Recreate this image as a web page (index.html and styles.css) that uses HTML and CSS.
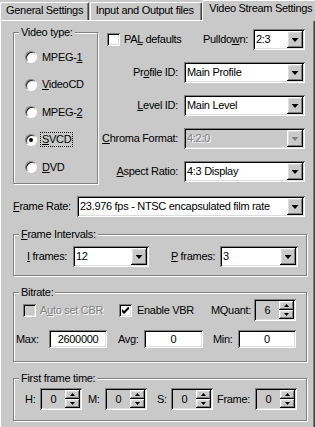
FILE: index.html
```html
<!DOCTYPE html>
<html lang="en">
<head>
    <meta charset="UTF-8">
    <meta name="viewport" content="width=device-width, initial-scale=1.0">
    <title>Video Stream Settings</title>
    <link rel="stylesheet" href="styles.css">
</head>
<body>
    <!-- Pestañas -->
    <div class="tabs">
        <div class="tab tab-general">General Settings</div>
        <div class="tab tab-io">Input and Output files</div>
        <div class="tab tab-active">Video Stream Settings</div>
    </div>

    <div class="panel">
        <div class="top">
            <!-- Tipo de video -->
            <fieldset class="group group-type">
                <legend>Video type:</legend>
                <div class="radio-list">
                    <div class="radio-row"><span class="radio"></span><span>MPEG-<u>1</u></span></div>
                    <div class="radio-row"><span class="radio"></span><span><u>V</u>ideoCD</span></div>
                    <div class="radio-row"><span class="radio"></span><span>MPEG-<u>2</u></span></div>
                    <div class="radio-row"><span class="radio on"></span><span class="focus"><u>S</u>VCD</span></div>
                    <div class="radio-row"><span class="radio"></span><span><u>D</u>VD</span></div>
                </div>
            </fieldset>

            <div class="params">
                <div class="row row-first">
                    <span class="check"></span>
                    <span class="check-label">PA<u>L</u> defaults</span>
                    <span class="lbl lbl-pull">Pulldo<u>w</u>n:</span>
                    <div class="combo combo-pull">
                        <span class="combo-text">2:3</span>
                        <span class="combo-btn"><i class="arrow"></i></span>
                    </div>
                </div>
                <div class="row">
                    <span class="lbl">Pr<u>o</u>file ID:</span>
                    <div class="combo combo-wide">
                        <span class="combo-text">Main Profile</span>
                        <span class="combo-btn"><i class="arrow"></i></span>
                    </div>
                </div>
                <div class="row">
                    <span class="lbl"><u>L</u>evel ID:</span>
                    <div class="combo combo-wide">
                        <span class="combo-text">Main Level</span>
                        <span class="combo-btn"><i class="arrow"></i></span>
                    </div>
                </div>
                <div class="row">
                    <span class="lbl"><u>C</u>hroma Format:</span>
                    <div class="combo combo-wide disabled">
                        <span class="combo-text">4:2:0</span>
                        <span class="combo-btn"><i class="arrow"></i></span>
                    </div>
                </div>
                <div class="row">
                    <span class="lbl"><u>A</u>spect Ratio:</span>
                    <div class="combo combo-wide">
                        <span class="combo-text">4:3 Display</span>
                        <span class="combo-btn"><i class="arrow"></i></span>
                    </div>
                </div>
            </div>
        </div>

        <!-- Frame rate -->
        <div class="rate-row">
            <span class="rate-lbl"><u>F</u>rame Rate:</span>
            <div class="combo combo-rate">
                <span class="combo-text">23.976 fps - NTSC encapsulated film rate</span>
                <span class="combo-btn"><i class="arrow"></i></span>
            </div>
        </div>

        <!-- Intervalos -->
        <fieldset class="group group-wide group-intervals">
            <legend><u>F</u>rame Intervals:</legend>
            <div class="int-row">
                <span class="int-lbl int-i"><u>I</u> frames:</span>
                <div class="combo combo-i">
                    <span class="combo-text">12</span>
                    <span class="combo-btn"><i class="arrow"></i></span>
                </div>
                <span class="int-lbl int-p"><u>P</u> frames:</span>
                <div class="combo combo-p">
                    <span class="combo-text">3</span>
                    <span class="combo-btn"><i class="arrow"></i></span>
                </div>
            </div>
        </fieldset>

        <!-- Bitrate -->
        <fieldset class="group group-wide group-bitrate">
            <legend>Bitrate:</legend>
            <div class="bit-row1">
                <div class="opt opt-auto">
                    <span class="check off"></span>
                    <span class="txt-off">A<u>u</u>to set CBR</span>
                </div>
                <div class="opt opt-vbr">
                    <span class="check">
                        <svg width="7" height="7" viewBox="0 0 7 7"><polygon points="0,2 2,4 6,0 7,0 7,2 2,7 0,5" fill="#000"/></svg>
                    </span>
                    <span>Enable VBR</span>
                </div>
                <span class="mq-lbl">MQuant:</span>
                <div class="spin spin-mq">
                    <span class="spin-val">6</span>
                    <span class="spin-btns"><span class="spin-btn"><i class="sarrow up"></i></span><span class="spin-btn"><i class="sarrow"></i></span></span>
                </div>
            </div>
            <div class="bit-row2">
                <span class="b-lbl b-max">Max:</span>
                <span class="edit e-max">2600000</span>
                <span class="b-lbl b-avg">Avg:</span>
                <span class="edit e-avg">0</span>
                <span class="b-lbl b-min">Min:</span>
                <span class="edit e-min">0</span>
            </div>
        </fieldset>

        <!-- Tiempo del primer frame -->
        <fieldset class="group group-wide group-time">
            <legend>First frame time:</legend>
            <div class="time-row">
                <span class="t-lbl t-h">H:</span>
                <div class="spin">
                    <span class="spin-val">0</span>
                    <span class="spin-btns"><span class="spin-btn"><i class="sarrow up"></i></span><span class="spin-btn"><i class="sarrow"></i></span></span>
                </div>
                <span class="t-lbl t-m">M:</span>
                <div class="spin">
                    <span class="spin-val">0</span>
                    <span class="spin-btns"><span class="spin-btn"><i class="sarrow up"></i></span><span class="spin-btn"><i class="sarrow"></i></span></span>
                </div>
                <span class="t-lbl t-s">S:</span>
                <div class="spin">
                    <span class="spin-val">0</span>
                    <span class="spin-btns"><span class="spin-btn"><i class="sarrow up"></i></span><span class="spin-btn"><i class="sarrow"></i></span></span>
                </div>
                <span class="t-lbl t-f">Frame:</span>
                <div class="spin">
                    <span class="spin-val">0</span>
                    <span class="spin-btns"><span class="spin-btn"><i class="sarrow up"></i></span><span class="spin-btn"><i class="sarrow"></i></span></span>
                </div>
            </div>
        </fieldset>
    </div>
</body>
</html>
```

FILE: styles.css
```css
body {
    margin: 0;
    width: 315px;
    height: 427px;
    overflow: hidden;
    background: #c9c9c9;
    font-family: "Liberation Sans", Arial, sans-serif;
    font-size: 11px;
    line-height: 13px;
    letter-spacing: -0.3px;
    color: #000;
    white-space: nowrap;
}

/* Pestañas */
.tabs {
    display: flex;
    align-items: flex-end;
    height: 20px;
}

.tab {
    box-sizing: border-box;
    height: 18px;
    padding-top: 1px;
    border-top: 1px solid #fff;
    border-left: 1px solid #fff;
    border-right: 1px solid #404040;
    border-radius: 2px 2px 0 0;
    box-shadow: inset -1px 0 #808080;
    overflow: hidden;
}

.tab-general { width: 89px; padding-left: 5px; }
.tab-io { width: 113px; margin-left: 1px; padding-left: 5px; }

.tab-active {
    position: relative; /* encima del borde del panel */
    width: 113px;
    height: 21px;
    margin-bottom: -1px;
    padding-left: 6px;
    background: #c9c9c9;
    border-right: none;
    box-shadow: none;
}

/* Panel */
.panel {
    box-sizing: border-box;
    height: 407px;
    border-top: 1px solid #fff;
    border-left: 1px solid #fff;
    border-right: 1px solid #404040;
    box-shadow: inset -1px 0 #808080;
}

/* Marcos agrupadores */
.group {
    box-sizing: border-box;
    margin: 0;
    padding: 0;
    min-width: 0;
    border: 1px solid #808080;
    box-shadow: inset 1px 1px #fff, 1px 1px #fff;
}

.group legend {
    margin-left: 5px;
    padding: 0 2px;
    background: #c9c9c9;
    line-height: 13px;
}

.top {
    display: flex;
    align-items: flex-start;
    padding-left: 12px;
}

.group-type {
    width: 85px;
    margin-top: 5px;
}

.radio-list {
    display: flex;
    flex-direction: column;
    gap: 13.5px;
    padding: 11px 0 9px 11px;
}

.radio-row {
    display: flex;
    align-items: center;
    gap: 5px;
    height: 14px;
}

.radio {
    position: relative;
    flex: none;
    box-sizing: border-box;
    width: 12px;
    height: 12px;
    border-radius: 50%;
    background: #fff;
    border: 1px solid;
    border-color: #808080 #fff #fff #808080;
    box-shadow: inset 1px 1px #202020;
}

.radio.on::after {
    content: "";
    position: absolute;
    left: 3px;
    top: 3px;
    width: 4px;
    height: 4px;
    border-radius: 50%;
    background: #000;
}

.focus {
    margin-left: -1px;
    padding: 0 1px;
    outline: 1px dotted #000;
}

/* Columna derecha */
.params {
    display: flex;
    flex-direction: column;
    gap: 12px;
    width: 198px;
    margin-left: 9px;
    padding-top: 8px;
}

.row {
    display: flex;
    align-items: center;
    justify-content: flex-end;
    gap: 6px;
    height: 21px;
}

.row-first { justify-content: flex-start; gap: 0; }
.check-label { margin-left: 4px; }
.lbl-pull { margin-left: auto; margin-right: 5px; }

/* Campos hundidos */
.combo, .spin, .edit, .check {
    box-shadow: inset 1px 1px #808080, inset -1px -1px #fff, inset 2px 2px #000, inset -2px -2px #dcdcdc;
}

.combo {
    display: flex;
    align-items: center;
    flex: none;
    box-sizing: border-box;
    height: 21px;
    padding: 2px;
    background: #fff;
}

.combo-text {
    flex: 1;
    padding-left: 1px;
    overflow: hidden;
}

.combo-btn, .spin-btn {
    display: flex;
    align-items: center;
    justify-content: center;
    box-sizing: border-box;
    background: #c9c9c9;
    box-shadow: inset -1px -1px #000, inset 1px 1px #fff, inset -2px -2px #808080, inset 2px 2px #dcdcdc;
}

.combo-btn { width: 16px; height: 17px; }

.arrow {
    display: block;
    width: 7px;
    height: 4px;
    margin-top: 1px;
    background: #000;
    clip-path: polygon(0 0, 100% 0, 50% 100%);
}

.combo.disabled { background: #c9c9c9; }
.combo.disabled .combo-text, .txt-off {
    color: #808080;
    text-shadow: 1px 1px #fff;
}
.combo.disabled .arrow { background: #808080; }

.combo-pull { width: 52px; }
.combo-wide { width: 121px; }

.check {
    display: flex;
    align-items: center;
    justify-content: center;
    flex: none;
    box-sizing: border-box;
    width: 13px;
    height: 13px;
    background: #fff;
}
.check.off { background: #c9c9c9; }

/* Frame rate */
.rate-row {
    display: flex;
    align-items: center;
    margin-top: 12px;
    padding-left: 12px;
}
.rate-lbl { width: 64px; }
.combo-rate { width: 228px; }

.group-wide {
    width: 294px;
    margin: 10px 0 0 12px;
}

/* Intervalos */
.group-intervals { margin-top: 11px; }

.int-row {
    display: flex;
    align-items: center;
    padding: 5px 0 8px 13px;
}
.int-i { width: 46px; }
.int-p { width: 49px; margin-left: 22px; }
.combo-i { width: 76px; }
.combo-p { width: 78px; }

/* Bitrate */
.bit-row1 {
    display: flex;
    align-items: center;
    height: 22px;
    padding-left: 9px;
}

.opt {
    display: flex;
    align-items: center;
    gap: 4px;
}
.opt-auto { width: 96px; }
.opt-vbr { width: 92px; gap: 5px; }
.mq-lbl { width: 43px; }
.spin-mq { width: 43px; }

.bit-row2 {
    display: flex;
    align-items: center;
    height: 20px;
    margin-top: 8px;
    padding: 0 0 12px 2px;
}

.b-max { width: 33px; }
.b-avg { width: 26px; margin-left: 11px; }
.b-min { width: 25px; margin-left: 10px; }

.edit {
    box-sizing: border-box;
    height: 18px;
    padding-top: 3px;
    background: #fff;
    text-align: center;
}
.e-max { width: 58px; }
.e-avg { width: 59px; }
.e-min { width: 58px; }

/* Spinners */
.spin {
    display: flex;
    box-sizing: border-box;
    width: 42px;
    height: 22px;
    padding: 2px;
    background: #c9c9c9;
}

.spin-val {
    flex: 1;
    text-align: center;
    line-height: 18px;
}

.spin-btns {
    display: flex;
    flex-direction: column;
    width: 15px;
}

.spin-btn { flex: 1; }

.sarrow {
    display: block;
    width: 5px;
    height: 3px;
    background: #000;
    clip-path: polygon(0 0, 100% 0, 50% 100%);
}
.sarrow.up { clip-path: polygon(50% 0, 100% 100%, 0 100%); }

/* Tiempo */
.time-row {
    display: flex;
    align-items: center;
    padding: 3px 0 10px 11px;
}
.t-h { width: 15px; }
.t-m { width: 17px; margin-left: 6px; }
.t-s { width: 14px; margin-left: 10px; }
.t-f { width: 38px; margin-left: 4px; }
```
